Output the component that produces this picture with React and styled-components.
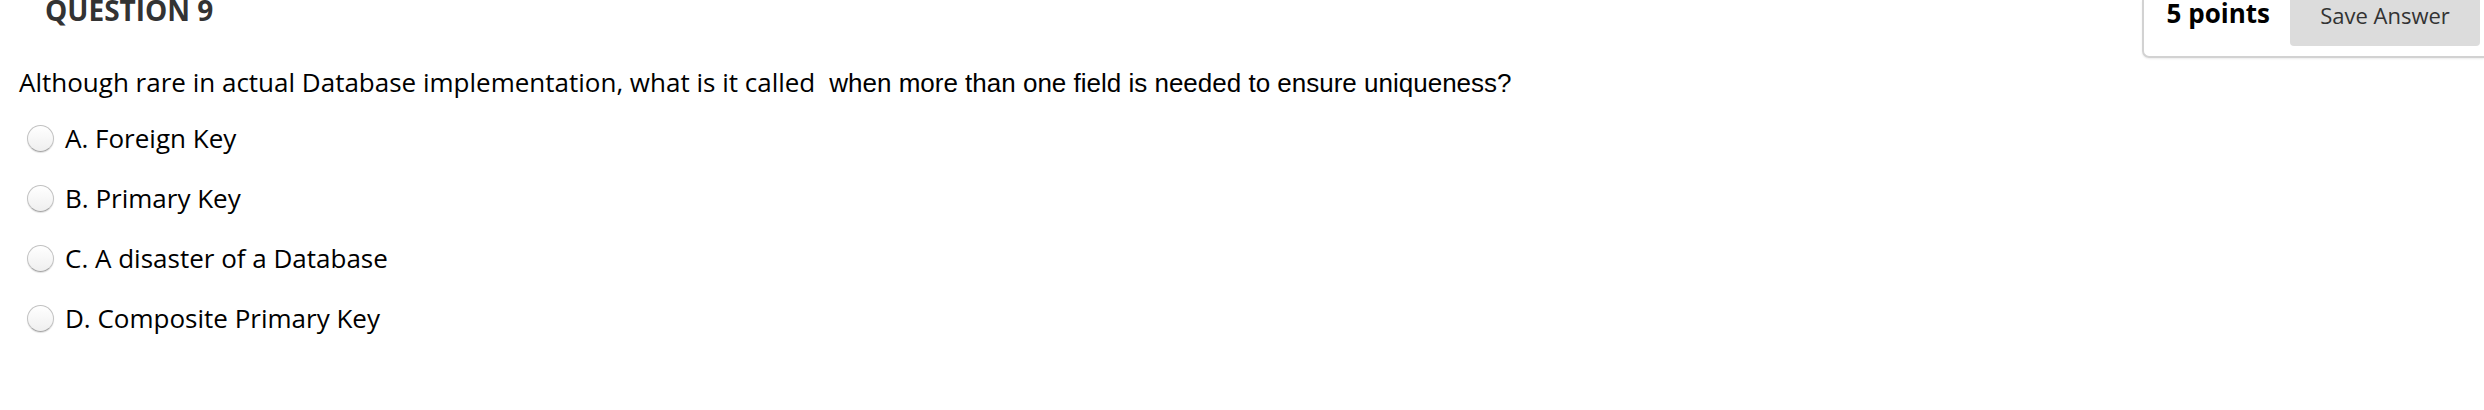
import React from "react";
import styled, { createGlobalStyle } from "styled-components";

const GlobalStyle = createGlobalStyle`
  html, body {
    margin: 0;
    padding: 0;
    background: #ffffff;
  }
  body {
    font-family: "Open Sans", "Noto Sans", sans-serif;
    color: #000;
  }
`;

const options = [
  { letter: "A.", text: "Foreign Key" },
  { letter: "B.", text: "Primary Key" },
  { letter: "C.", text: "A disaster of a Database" },
  { letter: "D.", text: "Composite Primary Key" },
];

const App = () => {
  const [selected, setSelected] = React.useState("");

  return (
    <>
      <GlobalStyle />
      <Page>
        <Header>
          <Heading>QUESTION 9</Heading>
          <PointsBox>
            <Points>5 points</Points>
            <SaveButton type="button">Save Answer</SaveButton>
          </PointsBox>
        </Header>
        <Prompt>
          Although rare in actual Database implementation, what is it called{"\u00a0"}
          <Pasted> when more than one field is needed to ensure uniqueness?</Pasted>
        </Prompt>
        <OptionList>
          {options.map(({ letter, text }) => (
            <Option key={letter} onClick={() => setSelected(letter)}>
              <Radio $checked={selected === letter} />
              <Label>
                {letter} {text}
              </Label>
            </Option>
          ))}
        </OptionList>
      </Page>
    </>
  );
};

export default App;

const Page = styled.div`
  padding: 0 19px;
`;

const Header = styled.div`
  display: flex;
  justify-content: space-between;
  align-items: flex-start;
  margin-right: -19px;
  height: 58px;
`;

const Heading = styled.h2`
  margin: -10px 0 0 26px;
  font-size: 28px;
  line-height: 40px;
  font-weight: 700;
  color: #333333;
`;

const PointsBox = styled.div`
  display: flex;
  align-items: flex-start;
  gap: 20px;
  height: 58px;
  box-sizing: border-box;
  padding: 0 4px 0 23px;
  border-left: 2px solid #d2d2d2;
  border-bottom: 2px solid #d2d2d2;
  border-bottom-left-radius: 7px;
  box-shadow: 0 1px 2px rgba(0, 0, 0, 0.08);
`;

const Points = styled.span`
  margin-top: -5px;
  font-size: 26px;
  line-height: 36px;
  font-weight: 700;
  color: #000;
`;

const SaveButton = styled.button`
  width: 190px;
  height: 46px;
  box-sizing: border-box;
  padding: 0 0 15px;
  border: none;
  border-radius: 0 0 4px 4px;
  background: #dcdcdc;
  color: #333333;
  font-family: "Open Sans", "Noto Sans", sans-serif;
  font-size: 22px;
  line-height: 31px;
  cursor: pointer;
`;

const Prompt = styled.p`
  margin: 6px 0 0;
  font-size: 26px;
  line-height: 36px;
  color: #000;
`;

const Pasted = styled.span`
  font-family: "Liberation Sans", Arial, sans-serif;
`;

const OptionList = styled.div`
  display: flex;
  flex-direction: column;
  margin-top: 7px;
`;

const Option = styled.label`
  display: flex;
  align-items: center;
  gap: 11px;
  height: 60px;
  padding-left: 8px;
  cursor: pointer;
`;

const Radio = styled.span`
  flex: none;
  width: 27px;
  height: 27px;
  box-sizing: border-box;
  border-radius: 50%;
  border: 1px solid #c2c2c2;
  border-bottom-color: #a8a8a8;
  background: ${({ $checked }) =>
    $checked
      ? "radial-gradient(circle, #333 0 5px, #fff 6px)"
      : "linear-gradient(#ffffff, #efefef)"};
  box-shadow: 0 1px 1px rgba(0, 0, 0, 0.12);
`;

const Label = styled.span`
  font-size: 26px;
  line-height: 36px;
  color: #000;
`;
